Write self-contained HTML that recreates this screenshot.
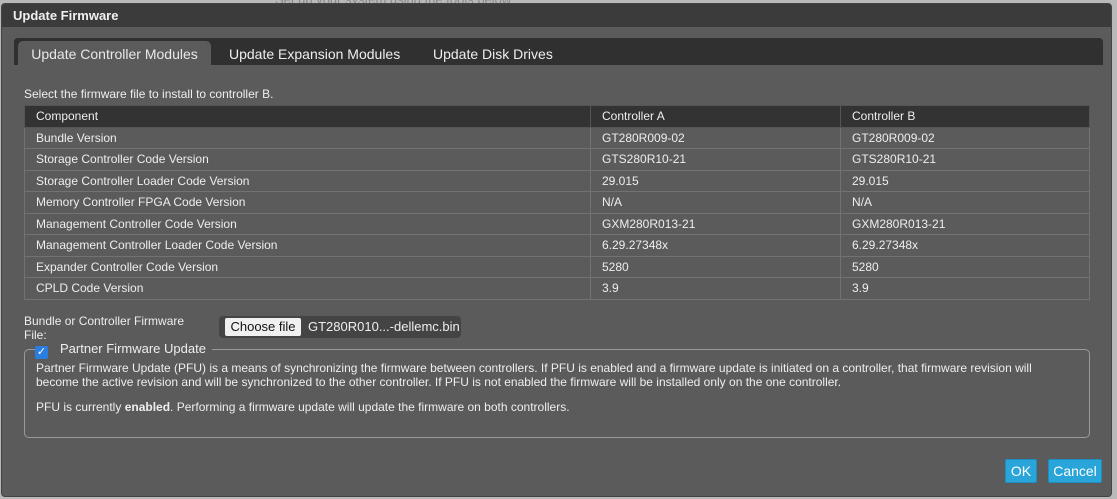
<!DOCTYPE html><html><head><style>
body{margin:0;width:1117px;height:499px;background:#b9b9b9;position:relative;overflow:hidden;font-family:"Liberation Sans",Arial,sans-serif;font-size:12px;color:#eee}
.bgtxt{position:absolute;left:275px;top:-8px;color:#888;font-size:13px}
.dlg{position:absolute;left:1px;top:3px;width:1109px;height:492px;background:#5b5b5b;border:1px solid #444;border-radius:4px;overflow:hidden}
.title{height:23px;background:#3b3b3b;font-weight:bold;font-size:13px;line-height:23px;padding-left:11px;color:#f0f0f0}
.tabs{position:absolute;left:12px;top:34px;width:1089px;height:27px;background:#303030;border-radius:4px 4px 0 0}
.tab{position:absolute;top:3px;height:24px;line-height:26px;font-size:14px;color:#eee}
.tab.a{left:4px;width:193px;background:#5b5b5b;border-radius:5px 5px 0 0;text-align:center;color:#e8e8e8}
.sel{position:absolute;left:24px;top:87px}
table{position:absolute;left:24px;top:105px;width:1066px;border-collapse:collapse}
td,th{border:1px solid #727272;height:20.5px;padding:0 0 0 11px;text-align:left;font-weight:normal;white-space:nowrap}
th{background:#333;border-color:#555}
.lbl{position:absolute;left:24px;top:314px;line-height:14px}
.file{position:absolute;left:219px;top:316px;width:242px;height:22px;background:#444;border-radius:4px;font-size:13px}
.btn{position:absolute;left:6px;top:2px;width:76px;height:18px;background:#f0f0f0;color:#111;text-align:center;line-height:18px;border-radius:2px}
.fs{position:absolute;left:24px;top:349px;width:1064px;height:87px;border:1px solid #9a9a9a;border-radius:5px}
.leg{position:absolute;left:35px;top:340px;background:#5b5b5b;padding:0 6px 0 0;height:18px;font-size:13px;line-height:18px}
.cb{display:inline-block;width:13px;height:13px;background:#2a7de1;border-radius:2px;vertical-align:-2px;margin-right:12px;color:#fff;font-size:11px;line-height:13px;text-align:center}
.p{position:absolute;left:36px;width:1040px;line-height:14px}
.ok{position:absolute;top:459px;height:22px;background:#2aa5d9;border:1px solid #1d8ec0;border-radius:2px;color:#fff;font-size:14px;line-height:22px;text-align:center}
</style></head><body>
<div class="bgtxt">Set up your system using the tools below</div>
<div class="dlg">
<div class="title">Update Firmware</div>
<div class="tabs"><div class="tab a">Update Controller Modules</div><div class="tab" style="left:215px">Update Expansion Modules</div><div class="tab" style="left:419px">Update Disk Drives</div></div>
</div>
<div class="sel">Select the firmware file to install to controller B.</div>
<table>
<tr><th style="width:554px">Component</th><th style="width:238px">Controller A</th><th>Controller B</th></tr>
<tr><td>Bundle Version</td><td>GT280R009-02</td><td>GT280R009-02</td></tr>
<tr><td>Storage Controller Code Version</td><td>GTS280R10-21</td><td>GTS280R10-21</td></tr>
<tr><td>Storage Controller Loader Code Version</td><td>29.015</td><td>29.015</td></tr>
<tr><td>Memory Controller FPGA Code Version</td><td>N/A</td><td>N/A</td></tr>
<tr><td>Management Controller Code Version</td><td>GXM280R013-21</td><td>GXM280R013-21</td></tr>
<tr><td>Management Controller Loader Code Version</td><td>6.29.27348x</td><td>6.29.27348x</td></tr>
<tr><td>Expander Controller Code Version</td><td>5280</td><td>5280</td></tr>
<tr><td>CPLD Code Version</td><td>3.9</td><td>3.9</td></tr>
</table>
<div class="lbl">Bundle or Controller Firmware<br>File:</div>
<div class="file"><div class="btn">Choose file</div><span style="position:absolute;left:89px;top:3px">GT280R010...-dellemc.bin</span></div>
<div class="fs"></div>
<div class="leg"><span class="cb">✓</span>Partner Firmware Update</div>
<div class="p" style="top:361px">Partner Firmware Update (PFU) is a means of synchronizing the firmware between controllers. If PFU is enabled and a firmware update is initiated on a controller, that firmware revision will become the active revision and will be synchronized to the other controller. If PFU is not enabled the firmware will be installed only on the one controller.</div>
<div class="p" style="top:400px">PFU is currently <b>enabled</b>. Performing a firmware update will update the firmware on both controllers.</div>
<div class="ok" style="left:1005px;width:30px">OK</div>
<div class="ok" style="left:1048px;width:52px">Cancel</div>
</body></html>
